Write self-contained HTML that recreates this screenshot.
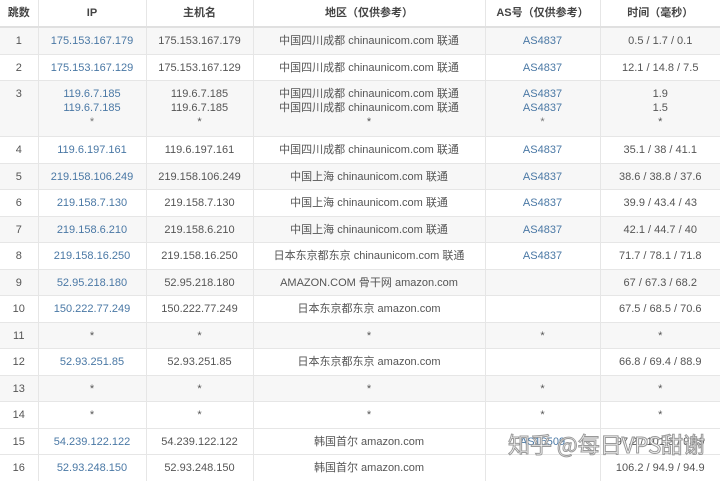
<!DOCTYPE html>
<html><head><meta charset="utf-8"><style>
html,body{margin:0;padding:0;background:#fff;width:720px;height:481px;overflow:hidden;position:relative}
table{border-collapse:collapse;table-layout:fixed;width:720px;font-family:"Liberation Sans","Noto Sans CJK SC",sans-serif;font-size:11px;color:#555}
td,th{border-right:1px solid #e6e6e6;border-bottom:1px solid #e6e6e6;text-align:center;padding:0;line-height:14px;white-space:nowrap;overflow:hidden}
td:last-child,th:last-child{border-right:none}
th{height:26px;font-weight:bold;color:#444;border-bottom:2px solid #e0e0e0;background:#fff}
tr.a td{height:26px}
tr.c td{height:25px}
tr.g td{background:#f7f7f7}
.b{color:#4a78a5}
.s{color:#777}
.t td{vertical-align:top;padding-top:6px;height:49px}
.wm{position:absolute;left:508px;top:428px;font-family:"Noto Sans CJK SC",sans-serif;font-size:22px;color:rgba(255,255,255,.85);-webkit-text-stroke:1px #999;white-space:nowrap}
</style></head><body>
<table>
<colgroup><col style="width:38px"><col style="width:108px"><col style="width:107px"><col style="width:232px"><col style="width:115px"><col style="width:120px"></colgroup>
<tr><th>跳数</th><th>IP</th><th>主机名</th><th>地区（仅供参考）</th><th>AS号（仅供参考）</th><th>时间（毫秒）</th></tr>
<tr class="g a"><td>1</td><td class="b">175.153.167.179</td><td>175.153.167.179</td><td>中国四川成都 chinaunicom.com 联通</td><td class="b">AS4837</td><td>0.5 / 1.7 / 0.1</td></tr>
<tr class="c"><td>2</td><td class="b">175.153.167.129</td><td>175.153.167.129</td><td>中国四川成都 chinaunicom.com 联通</td><td class="b">AS4837</td><td>12.1 / 14.8 / 7.5</td></tr>
<tr class="g t"><td>3</td><td class="b">119.6.7.185<br>119.6.7.185<br><span class="s">*</span></td><td>119.6.7.185<br>119.6.7.185<br>*</td><td>中国四川成都 chinaunicom.com 联通<br>中国四川成都 chinaunicom.com 联通<br>*</td><td class="b">AS4837<br>AS4837<br><span class="s">*</span></td><td>1.9<br>1.5<br>*</td></tr>
<tr class="a"><td>4</td><td class="b">119.6.197.161</td><td>119.6.197.161</td><td>中国四川成都 chinaunicom.com 联通</td><td class="b">AS4837</td><td>35.1 / 38 / 41.1</td></tr>
<tr class="g c"><td>5</td><td class="b">219.158.106.249</td><td>219.158.106.249</td><td>中国上海 chinaunicom.com 联通</td><td class="b">AS4837</td><td>38.6 / 38.8 / 37.6</td></tr>
<tr class="a"><td>6</td><td class="b">219.158.7.130</td><td>219.158.7.130</td><td>中国上海 chinaunicom.com 联通</td><td class="b">AS4837</td><td>39.9 / 43.4 / 43</td></tr>
<tr class="g c"><td>7</td><td class="b">219.158.6.210</td><td>219.158.6.210</td><td>中国上海 chinaunicom.com 联通</td><td class="b">AS4837</td><td>42.1 / 44.7 / 40</td></tr>
<tr class="a"><td>8</td><td class="b">219.158.16.250</td><td>219.158.16.250</td><td>日本东京都东京 chinaunicom.com 联通</td><td class="b">AS4837</td><td>71.7 / 78.1 / 71.8</td></tr>
<tr class="g c"><td>9</td><td class="b">52.95.218.180</td><td>52.95.218.180</td><td>AMAZON.COM 骨干网 amazon.com</td><td></td><td>67 / 67.3 / 68.2</td></tr>
<tr class="a"><td>10</td><td class="b">150.222.77.249</td><td>150.222.77.249</td><td>日本东京都东京 amazon.com</td><td></td><td>67.5 / 68.5 / 70.6</td></tr>
<tr class="g c"><td>11</td><td>*</td><td>*</td><td>*</td><td>*</td><td>*</td></tr>
<tr class="a"><td>12</td><td class="b">52.93.251.85</td><td>52.93.251.85</td><td>日本东京都东京 amazon.com</td><td></td><td>66.8 / 69.4 / 88.9</td></tr>
<tr class="g c"><td>13</td><td>*</td><td>*</td><td>*</td><td>*</td><td>*</td></tr>
<tr class="a"><td>14</td><td>*</td><td>*</td><td>*</td><td>*</td><td>*</td></tr>
<tr class="c"><td>15</td><td class="b">54.239.122.122</td><td>54.239.122.122</td><td>韩国首尔 amazon.com</td><td class="b">AS16509</td><td>97.2 / 101.3 / 93.9</td></tr>
<tr class="a"><td>16</td><td class="b">52.93.248.150</td><td>52.93.248.150</td><td>韩国首尔 amazon.com</td><td></td><td>106.2 / 94.9 / 94.9</td></tr>
</table>
<div class="wm">知乎 @每日VPS甜谢</div>
</body></html>
